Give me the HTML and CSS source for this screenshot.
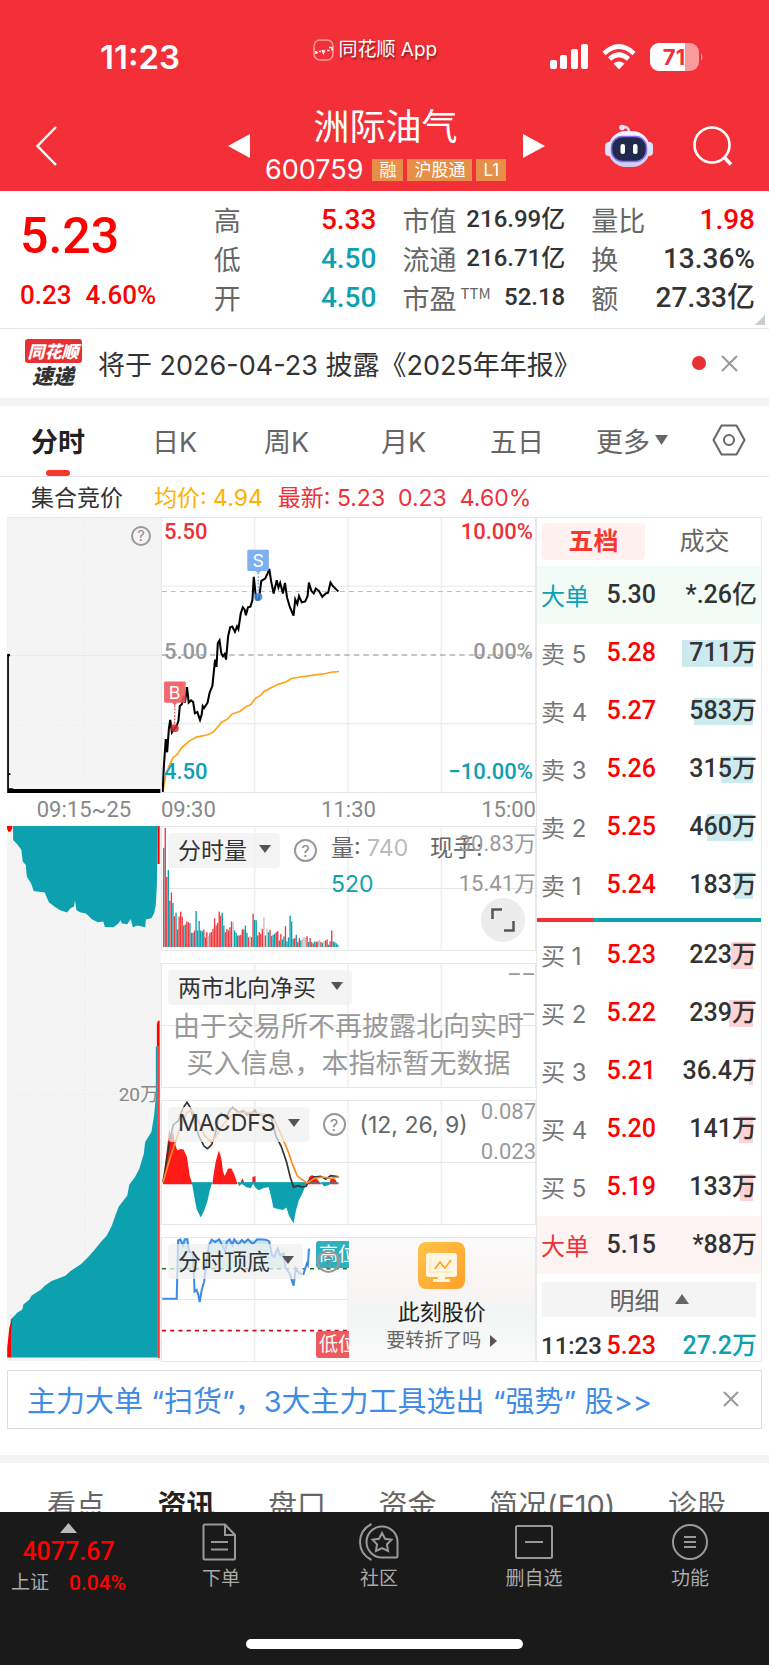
FILE: index.html
```html
<!DOCTYPE html>
<html lang="zh-CN">
<head>
<meta charset="utf-8">
<meta name="viewport" content="width=device-width, initial-scale=1">
<title>洲际油气 600759</title>
<link rel="stylesheet" href="styles.css">
</head>
<body>
<header class="top">
  <div class="status">
    <time class="clock">11:23</time>
    <div class="brand">
      <svg width="21" height="22" viewBox="0 0 21 22" aria-hidden="true"><rect x="1" y="1" width="19" height="20" rx="6" fill="none" stroke="#f99a9d" stroke-width="1.5"/><path d="M2 13.500h3M3 12v3M6 12.500h2M9 11l1.500 3 1-3M14 11.500h2.500M16 8.500h3v3" fill="none" stroke="#fff" stroke-width="1.600"/></svg>
      <span>同花顺 App</span>
    </div>
    <div class="signals">
      <svg width="38" height="26" viewBox="0 0 38 26" fill="#fff" aria-hidden="true"><rect x="0" y="16" width="7" height="9" rx="2"/><rect x="10" y="11" width="7" height="14" rx="2"/><rect x="21" y="5" width="7" height="20" rx="2"/><rect x="31" y="0" width="7" height="25" rx="2"/></svg>
      <svg width="34" height="26" viewBox="0 0 34 26" aria-hidden="true"><g fill="none" stroke="#fff" stroke-width="4.6"><path d="M2 9.500Q17-4.500 32 9.500"/><path d="M7.500 15Q17 6.500 26.500 15"/></g><path d="M11.500 19.500Q17 15.500 22.500 19.500L17 25.500Z" fill="#fff"/></svg>
      <svg width="54" height="28" viewBox="0 0 54 28" aria-hidden="true"><rect width="49" height="28" rx="9" fill="#f99a9d"/><path d="M9 0H35V28H9A9 9 0 0 1 0 19V9A9 9 0 0 1 9 0Z" fill="#fff"/><path d="M51 10q3 4 0 8Z" fill="#f99a9d"/><text class="battery-text" x="24" y="22" text-anchor="middle">71</text></svg>
    </div>
  </div>
  <nav class="titlebar">
    <button class="plain" aria-label="返回"><svg width="22" height="40" viewBox="0 0 22 40"><path d="M20 1L1.500 20 20 39" fill="none" stroke="#fff" stroke-width="2.400"/></svg></button>
    <button class="plain" aria-label="上一只"><svg width="22" height="26" viewBox="0 0 22 26"><path d="M22 1V25L0 13Z" fill="#fff"/></svg></button>
    <div class="stock">
      <h1>洲际油气</h1>
      <div class="code"><span>600759</span><i>融</i><i>沪股通</i><i>L1</i></div>
    </div>
    <button class="plain" aria-label="下一只"><svg width="22" height="26" viewBox="0 0 22 26"><path d="M0 1V25L22 13Z" fill="#fff"/></svg></button>
    <button class="plain" aria-label="智能助手"><svg width="48" height="44" viewBox="0 0 48 44"><defs><linearGradient id="rb" x1="0" y1="0" x2="0" y2="1"><stop offset="0" stop-color="#f6f7ff"/><stop offset="1" stop-color="#c9cdf3"/></linearGradient></defs><path d="M17 3q7-1 7 5" fill="none" stroke="#d6d8f5" stroke-width="2.600"/><circle cx="17" cy="3.500" r="2.800" fill="#e6e8fb"/><rect x="0" y="18" width="8" height="14" rx="4" fill="#dfe1f8"/><rect x="40" y="18" width="8" height="14" rx="4" fill="#dfe1f8"/><rect x="3" y="7" width="42" height="36" rx="18" fill="url(#rb)"/><rect x="6.500" y="12.500" width="35" height="25" rx="11" fill="#1f2a4c" stroke="#8a6cf0" stroke-width="1.500"/><rect x="15.500" y="20" width="4.500" height="10" rx="2" fill="#fff"/><rect x="28" y="20" width="4.500" height="10" rx="2" fill="#fff"/></svg></button>
    <button class="plain" aria-label="搜索"><svg width="40" height="40" viewBox="0 0 40 40" fill="none" stroke="#fff" stroke-width="2.600"><circle cx="19" cy="19" r="17.500"/><path d="M31 31l7 7.500" stroke-width="3.500"/></svg></button>
  </nav>
</header>

<main>
<section class="quote">
  <div class="price">
    <strong>5.23</strong>
    <p><span>0.23</span><span>4.60%</span></p>
  </div>
  <dl>
    <div><dt>高</dt><dd class="up">5.33</dd></div>
    <div><dt>低</dt><dd class="down">4.50</dd></div>
    <div><dt>开</dt><dd class="down">4.50</dd></div>
  </dl>
  <dl class="compact">
    <div><dt>市值</dt><dd>216.99亿</dd></div>
    <div><dt>流通</dt><dd>216.71亿</dd></div>
    <div><dt>市盈<sup>TTM</sup></dt><dd>52.18</dd></div>
  </dl>
  <dl>
    <div><dt>量比</dt><dd class="up">1.98</dd></div>
    <div><dt>换</dt><dd>13.36%</dd></div>
    <div><dt>额</dt><dd>27.33亿</dd></div>
  </dl>
  <span class="corner"></span>
</section>

<section class="news">
  <div class="badge"><b>同花顺</b><em>速递</em></div>
  <a href="#news">将于 2026-04-23 披露《2025年年报》</a>
  <span class="dot"></span>
  <button class="plain" aria-label="关闭"><svg width="17" height="17" viewBox="0 0 17 17"><path d="M1 1l15 15M16 1L1 16" stroke="#999" stroke-width="2"/></svg></button>
</section>

<nav class="periods">
  <button class="active">分时</button>
  <button>日K</button>
  <button>周K</button>
  <button>月K</button>
  <button>五日</button>
  <button>更多<svg width="13" height="10" viewBox="0 0 13 10"><path d="M0 0H13L6.500 10Z" fill="#666"/></svg></button>
  <button aria-label="设置"><svg width="34" height="32" viewBox="0 0 34 32" fill="none" stroke="#666" stroke-width="2"><path d="M9.500 1.500H24.500L32.500 16L24.500 30.500H9.500L1.500 16Z" stroke-linejoin="round"/><circle cx="17" cy="16" r="5"/></svg></button>
</nav>

<div class="legend">
  <span>集合竞价</span><span class="avg">均价: 4.94</span><span class="latest">最新: 5.23&nbsp; 0.23&nbsp; 4.60%</span>
</div>

<section class="board">
  <div class="auction">
    <div class="auction-price">
      <svg viewBox="20 22 447 828" preserveAspectRatio="none">
        <g stroke="#e6e6e6" stroke-width="2"><path d="M246 22V850M20 230H467M20 646H467" stroke-dasharray="3 6"/><path d="M20 436H467M20 22V850"/></g>
        <path d="M23 432V850M24 793h6" stroke="#000" stroke-width="5"/><circle cx="25" cy="435" r="4"/>
        <path d="M23 836H36L40 838H465V850H23Z"/>
      </svg>
      <span class="help">?</span>
    </div>
    <div class="axis center">09:15~25</div>
    <div class="auction-vol">
      <svg viewBox="0 0 154 535" preserveAspectRatio="none">
        <path d="M78 0V535M0 268H154" stroke="#e6e6e6" stroke-dasharray="1 2"/>
        <g transform="translate(-7 -11) scale(.344 .333)">
          <path fill="#0da1b0" d="M38 33V75L50 88 62 104 66 140 75 150 78 185 90 205 98 228 130 233 142 262 160 276 175 286 195 293 205 280 215 275 218 256 222 285 232 292 250 296 268 314 285 322 300 320 305 336 330 337 345 325 350 316 355 326 370 328 380 312 386 337 400 332 422 337 424 314 440 310 448 295 453 270 456 210 458 33Z"/>
          <path fill="red" d="M20 33H36V40L30 50H24L20 40ZM458 33H464V147H458Z"/>
        </g>
        <g transform="translate(-7 254) scale(.344 .335)">
          <path fill="#0da1b0" d="M31 828V715L38 708 50 695 65 685 68 670 85 656 92 643 120 625 130 614 150 600 190 584 205 570 235 550 255 530 275 507 292 485 310 465 325 435 335 405 345 378 370 345 376 312 392 290 405 265 418 220 422 185 440 155 448 105 453 50V-100H459V828Z"/>
          <path fill="red" d="M21 828V800L27 740 36 708 32 760V828ZM456-165L459-177H464V830H460V-100H456Z"/>
        </g>
      </svg>
      <span class="vol-mark">20万</span>
    </div>
  </div>

  <div class="charts">
    <div class="panel main">
      <svg viewBox="467 22 1089 828" preserveAspectRatio="none" fill="none">
        <path class="grid" d="M738 22V850M1010 22V850M1282 22V850M467 228H1556M467 644H1556"/>
        <path d="M467 244H1556" stroke="#d9b98c" stroke-width="3" stroke-dasharray="14 12"/>
        <path d="M467 436H1556" stroke="#888" stroke-width="3" stroke-dasharray="16 12"/>
        <path stroke="#ffa31a" stroke-width="5" d="M470 846L478 800 490 765 500 745 510 738 525 716 545 697 568 684 600 677 615 670 628 656 640 640 658 630 672 614 695 606 712 592 726 586 740 567 755 558 765 546 785 535 808 524 830 517 845 507 880 501 915 496 945 492 960 488 984 486"/>
        <path stroke="#000" stroke-width="6" d="M469 850L472 780 478 690 482 730 487 660 491 632 496 670 504 657 510 650 515 635 519 590 525 585 530 560 534 580 540 533 545 580 552 573 558 578 563 612 570 608 578 632 583 615 586 590 590 596 600 580 606 550 614 530 618 490 622 450 626 472 630 400 635 392 640 430 645 440 650 433 654 450 660 380 666 352 672 350 680 366 686 350 690 358 697 310 703 292 708 298 712 316 718 292 725 290 731 270 735 200 740 250 743 268 750 268 757 212 768 205 775 190 780 176 786 215 793 250 802 210 807 232 812 218 820 250 826 218 832 262 840 290 851 317 856 268 862 282 867 258 875 277 885 274 892 258 896 217 903 242 910 250 916 235 925 242 935 260 945 250 952 248 959 217 966 228 975 237 982 244"/>
        <g fill="#ee5a5e"><path fill-opacity=".9" d="M476 516H532Q536 516 536 520V576Q536 580 532 580H512L504 588 496 580H476Q473 580 473 576V520Q473 516 476 516Z"/><circle cx="504" cy="657" r="12" fill="#d8232b" fill-opacity=".85"/><path d="M504 588V650" stroke="#ee5a5e" stroke-width="4" stroke-dasharray="5 5"/></g>
        <g fill="#6fa8f0"><path fill-opacity=".9" d="M720 118H775Q779 118 779 122V178Q779 182 775 182H756L748 190 740 182H720Q716 182 716 178V122Q716 118 720 118Z"/><circle cx="748" cy="260" r="12" fill="#3f86e0" fill-opacity=".85"/><path d="M748 188V254" stroke="#6fa8f0" stroke-width="4" stroke-dasharray="5 5"/></g>
        <g class="marker"><text x="504" y="568" text-anchor="middle">B</text><text x="748" y="170" text-anchor="middle">S</text></g>
      </svg>
      <span class="tick lt up2">5.50</span><span class="tick rt up2">10.00%</span>
      <span class="tick lm">5.00</span><span class="tick rm">0.00%</span>
      <span class="tick lb down">4.50</span><span class="tick rb down">−10.00%</span>
    </div>
    <div class="axis"><span>09:30</span><span>11:30</span><span>15:00</span></div>

    <div class="panel sub vol">
      <svg viewBox="467 32 1089 372" preserveAspectRatio="none" id="volume"><path class="grid" d="M738 32V404M1010 32V404M1282 32V404M467 218H1556"/></svg>
      <div class="tools"><button class="pill">分时量<s></s></button><span class="help big">?</span><p class="vol-text"><span>量: <i>740</i></span><span>现手:</span><b>520</b></p></div>
      <div class="scale"><span>30.83万</span><span>15.41万</span></div>
      <button class="expand" aria-label="全屏"><svg width="24" height="24" viewBox="0 0 24 24" fill="none" stroke="#555" stroke-width="2.500"><path d="M1.500 11V1.500H11M13 22.500H22.500V13"/></svg></button>
    </div>

    <div class="panel sub">
      <svg viewBox="467 32 1089 372" preserveAspectRatio="none"><path class="grid" d="M738 32V404M1010 32V404M1282 32V404M467 218H1556"/></svg>
      <div class="tools"><button class="pill wide">两市北向净买<s></s></button></div>
      <div class="scale"><span>––</span><span>––</span></div>
      <p class="notice">由于交易所不再披露北向实时<br>买入信息，本指标暂无数据</p>
    </div>

    <div class="panel sub">
      <svg viewBox="467 58 1089 372" preserveAspectRatio="none" fill="none">
        <path class="grid" d="M738 58V430M1010 58V430M1282 58V430M467 244H1556"/>
        <path fill="#ff1a1a" d="M470 310L476 250 484 180 488 145 494 165 500 152 504 185 512 208 520 203 530 205 540 228 548 285 556 310ZM614 310L617 285 624 240 633 208 640 230 645 270 650 285 660 262 670 262 678 280 688 310ZM694 310L702 292 709 310ZM731 310V288L740 285V310ZM890 310L897 288 905 282 915 288 932 310ZM955 310L960 292 972 295 982 310Z"/>
        <path fill="#0da1b0" d="M554 304L560 340 568 385 580 410 590 390 600 360 606 330 614 304ZM688 304L692 316 700 308 712 318 726 322 733 308 740 320 750 328 762 322 778 318 784 340 792 380 805 385 820 388 830 380 838 405 851 428 858 390 866 360 878 335 890 304ZM930 304L940 316 955 312 958 304Z"/>
        <path d="M556 306H614M688 306H984" stroke="#0da1b0" stroke-width="3"/>
        <path stroke="#333" stroke-width="5" d="M470 304L480 240 490 175 500 130 515 118 528 80 540 62 550 78 562 120 575 165 590 195 600 202 612 190 622 160 632 105 640 95 655 110 665 85 673 78 690 92 705 88 715 100 730 95 738 85 745 98 760 102 785 105 800 165 815 195 830 240 842 290 851 318 865 314 875 318 888 316 895 300 910 288 930 286 945 294 960 284 984 287"/>
        <path stroke="#ff8a1f" stroke-width="5" d="M470 304L485 250 500 200 520 140 538 95 552 85 570 110 590 160 610 182 625 165 645 130 665 105 690 92 730 93 770 98 795 115 815 160 835 210 850 255 862 285 890 306 912 292 935 288 960 292 984 287"/>
      </svg>
      <div class="tools"><button class="pill">MACDFS<s></s></button><span class="help big">?</span><p>(12, 26, 9)</p></div>
      <div class="scale"><span>0.087</span><span>0.023</span></div>
    </div>

    <div class="panel sub">
      <svg viewBox="467 468 1089 372" preserveAspectRatio="none" fill="none">
        <path class="grid" d="M738 468V840M1010 468V840M467 654H1010"/>
        <path fill="#b9e0e8" fill-opacity=".8" d="M510 561L514 475 541 472 546 510 558 512 560 561ZM595 561L604 490 612 473 780 475 788 520 795 525 805 500 812 520 822 515 828 561Z"/>
        <path d="M467 561H1010" stroke="#1f7a2a" stroke-width="5" stroke-dasharray="12 12"/>
        <path d="M467 748H1010" stroke="#c1121b" stroke-width="5" stroke-dasharray="12 12"/>
        <path stroke="#3f8be6" stroke-width="6" d="M468 652H510L514 475 520 472 528 490 534 472 541 472 546 510 558 512 562 630 568 625 573 640 577 662 583 625 590 600 597 540 604 490 612 473 622 480 634 472 645 495 652 510 656 480 664 472 672 490 678 472 690 488 700 474 708 482 718 472 732 486 745 472 770 473 780 478 788 520 795 525 800 510 805 500 812 520 822 515 828 560 840 575 851 612 858 560 868 575 880 577 890 545 893 550 896 500"/>
      </svg>
      <span class="level high">高位</span><span class="level low">低位</span>
      <div class="tools"><button class="pill">分时顶底<s></s></button><span class="help big">?</span></div>
      <a class="promo-card" href="#turn">
        <svg width="47" height="47" viewBox="0 0 47 47"><defs><linearGradient id="og" x1="0" y1="0" x2="1" y2="1"><stop offset="0" stop-color="#ffc44a"/><stop offset="1" stop-color="#ffa02a"/></linearGradient></defs><rect width="47" height="47" rx="8" fill="url(#og)"/><rect x="8" y="11" width="31" height="24" rx="3" fill="#fff6e2"/><path d="M20 35h7v2h5v3H15v-3h5Z" fill="#fff6e2"/><path d="M12 16V30H34" fill="none" stroke="#ffe0a0"/><path d="M17 27l5-7 3 4 2 2 6-8" fill="none" stroke="#ffa52e" stroke-width="1.800"/></svg>
        <b>此刻股价</b>
        <span>要转折了吗<svg width="7" height="12" viewBox="0 0 7 12"><path d="M0 0L7 6L0 12Z" fill="#555"/></svg></span>
      </a>
    </div>
  </div>

  <div class="book">
    <div class="book-tabs"><button class="active">五档</button><button>成交</button></div>
    <table>
      <tbody>
        <tr class="big sell"><th scope="row">大单</th><td>5.30</td><td>*.26亿</td></tr>
        <tr><th scope="row">卖 5</th><td>5.28</td><td><u style="width:71px"></u><span>711万</span></td></tr>
        <tr><th scope="row">卖 4</th><td>5.27</td><td><u style="width:59px"></u><span>583万</span></td></tr>
        <tr><th scope="row">卖 3</th><td>5.26</td><td><u style="width:32px"></u><span>315万</span></td></tr>
        <tr><th scope="row">卖 2</th><td>5.25</td><td><u style="width:46px"></u><span>460万</span></td></tr>
        <tr><th scope="row">卖 1</th><td>5.24</td><td><u style="width:18px"></u><span>183万</span></td></tr>
      </tbody>
    </table>
    <div class="ratio"><i></i></div>
    <table class="bids">
      <tbody>
        <tr><th scope="row">买 1</th><td>5.23</td><td><u style="width:22px"></u><span>223万</span></td></tr>
        <tr><th scope="row">买 2</th><td>5.22</td><td><u style="width:24px"></u><span>239万</span></td></tr>
        <tr><th scope="row">买 3</th><td>5.21</td><td><u style="width:4px"></u><span>36.4万</span></td></tr>
        <tr><th scope="row">买 4</th><td>5.20</td><td><u style="width:14px"></u><span>141万</span></td></tr>
        <tr><th scope="row">买 5</th><td>5.19</td><td><u style="width:13px"></u><span>133万</span></td></tr>
        <tr class="big buy"><th scope="row">大单</th><td>5.15</td><td>*88万</td></tr>
      </tbody>
    </table>
    <button class="detail">明细<svg width="14" height="10" viewBox="0 0 14 10"><path d="M0 10H14L7 0Z" fill="#666"/></svg></button>
    <table class="trades"><tbody><tr><th scope="row">11:23</th><td>5.23</td><td>27.2万</td></tr></tbody></table>
  </div>
</section>

<section class="promo">
  <a href="#tools">主力大单 “扫货”，3大主力工具选出 “强势” 股&gt;&gt;</a>
  <button class="plain" aria-label="关闭"><svg width="16" height="16" viewBox="0 0 16 16"><path d="M1 1l14 14M15 1L1 15" stroke="#999" stroke-width="2"/></svg></button>
</section>

<nav class="sections">
  <button>看点</button><button class="active">资讯</button><button>盘口</button><button>资金</button><button>简况(F10)</button><button>诊股</button>
</nav>
</main>

<footer class="dock">
  <div class="dock-row">
    <a class="index" href="#index"><svg width="17" height="10" viewBox="0 0 17 10"><path d="M0 10H17L8.500 0Z" fill="#bbb"/></svg><strong>4077.67</strong><p><span>上证</span><b>0.04%</b></p></a>
    <button><svg width="40" height="38" viewBox="0 0 40 38"><path d="M4 1.500H24L34 12V35.500Q34 36.500 33 36.500H3.500Q2.500 36.500 2.500 35.500V2.500Q2.500 1.500 4 1.500ZM24 1.500V12H34M10 19H27M10 26.500H27"/></svg>下单</button>
    <button><svg width="40" height="38" viewBox="0 0 40 38"><path d="M12.500 1Q1 7 1 19T12.500 37M23 3.500A15.500 15.500 0 0 1 38.500 19V33Q38.500 34.500 37 34.500H23A15.500 15.500 0 0 1 23 3.500ZM23 10L26 15.800 32.500 16.800 28 21.400 29 28 23 25 17 28 18 21.400 13.500 16.800 20 15.800Z"/></svg>社区</button>
    <button><svg width="40" height="38" viewBox="0 0 40 38"><rect x="2" y="3" width="36" height="32" rx="1.500"/><path d="M11 19H29"/></svg>删自选</button>
    <button><svg width="40" height="38" viewBox="0 0 40 38"><circle cx="20" cy="19" r="17"/><path d="M14 14H26M14 19H26M14 24H26"/></svg>功能</button>
  </div>
  <span class="home"></span>
</footer>
<script src="script.js"></script>
</body>
</html>
```
FILE: styles.css
```css
* { box-sizing: border-box; }
body, h1, p, dl, dd { margin: 0; }
:root {
  --cjk: "Noto Sans CJK SC", sans-serif;
  --up: #ff0000;
  --down: #0da1b0;
  --line: #e8e8e8;
}
body { background: #fff; color: #333; font-family: Inter, var(--cjk); }
button { border: 0; padding: 0; margin: 0; background: none; font: inherit; color: inherit; cursor: pointer; }
a { color: inherit; text-decoration: none; }
svg { display: block; }
i, em { font-style: normal; }
.plain { display: block; justify-self: start; }

.top { background: #f33037; color: #fff; }
.status { display: grid; grid-template-columns: 213fr 238fr 153fr; align-items: center; height: 96px; padding: 18px 65px 0 100px; }
.clock { font-size: 33px; font-weight: 600; }
.brand { display: flex; align-items: center; gap: 5px; font-size: 19px; line-height: 24px; padding-bottom: 14px; text-shadow: 1px 2px 2px rgba(90, 0, 0, .6); white-space: nowrap; }
.signals { display: flex; align-items: center; gap: 14px; }
.battery-text { font: 700 22px Inter, sans-serif; fill: #f33037; }
.titlebar { display: grid; grid-template-columns: 192fr 37fr 258fr 82fr 88fr 40fr; align-items: center; height: 95px; padding: 5px 36px 6px; }
.stock { width: max-content; padding-bottom: 6px; text-align: center; white-space: nowrap; }
.stock h1 { margin-bottom: 8px; font: 400 36px/46px var(--cjk); }
.code { display: flex; align-items: center; gap: 4px; font-size: 27px; line-height: 30px; }
.code span { margin-right: 5px; }
.code i { background: #e58f48; font-size: 17px; line-height: 22px; padding: 0 7px; }

.quote { position: relative; display: grid; grid-template-columns: 193fr 162fr 188fr 189fr; padding: 9px 14px 10px 20px; border-bottom: 1px solid var(--line); }
.quote dl { white-space: nowrap; }
.quote dl + dl { margin-left: 26px; }
.price { color: var(--up); font-family: Roboto, sans-serif; font-weight: 500; }
.price strong { display: block; font-size: 50px; line-height: 72px; font-weight: 500; }
.price p { display: flex; gap: 14px; font-size: 26px; line-height: 46px; }
.quote dl div { display: flex; justify-content: space-between; align-items: center; height: 39px; }
.quote dt { font: 400 27px/39px var(--cjk); color: #666; }
.quote dd { font: 500 28px/39px Roboto, var(--cjk); }
.quote .compact dd { font-size: 24px; }
.quote sup { font-size: 15px; line-height: 0; margin-left: 4px; }
.up { color: var(--up); }
.up2 { color: #ee3038; }
.down { color: var(--down); }
.corner { position: absolute; right: 4px; bottom: 3px; border-left: 10px solid transparent; border-bottom: 10px solid #ccc; }

.news { display: flex; align-items: center; height: 69px; padding: 0 31px 1px 24px; }
.badge { display: flex; flex-direction: column; align-items: center; width: 58px; font: italic 900 17px/24px var(--cjk); }
.badge b { width: 57px; border-radius: 3px; background: #ea2f33; color: #fff; text-align: center; }
.badge em { font-style: italic; font-size: 21px; line-height: 24px; }
.news a { flex: 1; margin-left: 16px; font-size: 27px; color: #333; white-space: nowrap; }
.dot { width: 14px; height: 14px; border-radius: 50%; background: #ea2f33; margin-right: 15px; }

.periods { display: grid; grid-template-columns: 121fr 112fr 117fr 109fr 106fr 116fr 34fr; height: 79px; padding: 0 23px 2px 31px; border-top: 8px solid #f4f4f4; border-bottom: 1px solid var(--line); font-size: 27px; color: #666; }
.periods button { position: relative; display: flex; align-items: center; gap: 5px; justify-self: start; white-space: nowrap; }
.periods .active { font-weight: 700; color: #222; }
.periods .active::after { content: ""; position: absolute; left: 50%; bottom: -2px; width: 24px; height: 6px; margin-left: -12px; border-radius: 3px; background: #f8382f; }

.legend { display: flex; align-items: center; height: 40px; padding: 0 0 2px 31px; font-size: 23px; white-space: nowrap; }
.legend .avg { margin: 0 15px 0 31px; color: #ffb000; }
.legend .latest { color: #ee3038; }

.board { display: grid; grid-template-columns: 154fr 375fr 226fr; margin: 0 7px; }
.board svg text { font-family: Inter, sans-serif; }
.auction-price, .auction-vol { position: relative; background: #f4f4f4; }
.auction-price { height: 276px; border-top: 1px solid var(--line); }
.auction-price > svg, .auction-vol > svg, .panel > svg { width: 100%; height: 100%; }
.auction-vol { height: 535px; }
.axis { display: flex; justify-content: space-between; align-items: center; height: 33px; font: 400 22px/33px Roboto, sans-serif; color: #888; }
.axis.center { justify-content: center; }
.help { display: flex; justify-content: center; align-items: center; width: 20px; height: 20px; border: 2px solid #999; border-radius: 50%; font-size: 14px; line-height: 1; color: #888; }
.help.big { width: 23px; height: 23px; font-size: 16px; flex: none; }
.auction-price .help { position: absolute; right: 10px; top: 8px; }
.vol-mark { position: absolute; right: 2px; top: 255px; font: 400 19px/28px Roboto, var(--cjk); color: #888; }

.panel { position: relative; border: 1px solid var(--line); overflow: hidden; }
.main { height: 276px; }
.sub { height: 125px; }
.sub + .sub { margin-top: 12px; }
.grid { stroke: var(--line); stroke-width: 3; fill: none; }
.marker { font-size: 52px; fill: #fff; }
.tick { position: absolute; font: 500 22px/26px Roboto, sans-serif; }
.lt, .lm, .lb { left: 2px; }
.rt, .rm, .rb { right: 2px; }
.lt, .rt { top: 1px; }
.lm, .rm { top: 121px; color: #999; }
.lb, .rb { bottom: 7px; }
.tools { position: absolute; left: 6px; top: 6px; display: flex; align-items: center; gap: 14px; font-size: 23px; color: #666; white-space: nowrap; }
.pill { display: flex; align-items: center; gap: 12px; height: 35px; padding: 0 9px 3px 10px; border-radius: 4px; background: rgba(240, 240, 240, .72); font-size: 23px; color: #333; }
.pill.wide { gap: 15px; }
.pill s { border: 6px solid transparent; border-top: 8px solid #555; border-bottom: 0; }
.vol-text { display: grid; grid-template-columns: 99px auto; align-self: start; line-height: 30px; row-gap: 6px; height: 30px; font-size: 23px; }
.vol-text i { color: #bbb; }
.vol-text b { color: var(--down); font-weight: 400; }
.scale { position: absolute; right: -1px; top: -9px; text-align: right; font: 400 22px/40px Roboto, var(--cjk); color: #999; }
.scale span { display: block; }
.vol .scale { top: -3px; }
.expand { position: absolute; right: 10px; bottom: 8px; display: grid; place-items: center; width: 44px; height: 44px; border-radius: 50%; background: #ececec; }
.notice { position: absolute; left: 0; right: 0; top: 42px; text-align: center; font: 400 27px/37px var(--cjk); color: #999; white-space: nowrap; }
.level { position: absolute; left: 154px; width: 60px; padding: 0 3px; border-radius: 3px; color: #fff; font-size: 19px; line-height: 27px; }
.high { top: 3px; background: #2fb0bd; }
.low { bottom: 3px; background: #ee5a5e; }
.promo-card { position: absolute; left: 50%; right: 0; top: 0; bottom: 0; display: flex; flex-direction: column; align-items: center; padding-top: 4px; background: linear-gradient(#fafafa, #fbf4f4 40%, #f1f5f4 60%, #fafafa); color: #222; }
.promo-card b { font-size: 22px; line-height: 32px; margin-top: 7px; font-weight: 400; }
.promo-card span { display: flex; align-items: center; gap: 9px; font-size: 19px; line-height: 26px; color: #666; }

.book { display: flex; flex-direction: column; border: 1px solid var(--line); }
.book-tabs { display: grid; grid-template-columns: 1fr 1fr; gap: 8px; height: 48px; padding: 5px 5px 6px; font-size: 25px; color: #666; }
.book-tabs button { border-radius: 4px; line-height: 37px; }
.book-tabs .active { background: #fff1f0; color: #f8382f; font-weight: 700; }
.book table { width: 100%; border-collapse: collapse; table-layout: fixed; white-space: nowrap; }
.book tr { height: 58px; }
.book th { width: 31%; padding: 0 0 2px 4px; text-align: left; font-size: 24px; font-weight: 400; color: #777; }
.book td { position: relative; width: 25%; padding: 0; font: 500 25px/30px Roboto, var(--cjk); color: var(--up); }
.book td:last-child { width: 44%; padding-right: 4px; text-align: right; color: #333; }
.book td span { position: relative; }
.book u { position: absolute; right: 8px; top: 16px; height: 27px; background: #cdebef; }
.bids u { background: #fdd3d5; }
.book .big td { color: #333; }
.sell { background: #f2fbf6; }
.buy { background: #fff4f4; }
.book .sell th { color: var(--down); }
.book .buy th { color: #ee3038; }
.ratio { height: 4px; margin: 4px 0; background: var(--down); }
.ratio i { display: block; width: 25%; height: 4px; background: #ee3038; }
.detail { display: flex; justify-content: center; align-items: center; gap: 15px; height: 35px; margin: 8px 5px 0; padding-bottom: 2px; background: #f4f4f4; font-size: 25px; color: #666; }
.book .trades { flex: 1; }
.book .trades tr { height: 42px; }
.book .trades th { font: 500 24px/30px Roboto, sans-serif; color: #333; }
.book .trades td:last-child { color: var(--down); }
.book .trades th, .book .trades td { padding-top: 13px; padding-bottom: 0; }

.promo { display: flex; justify-content: space-between; align-items: center; height: 59px; margin: 8px 7px 26px; padding: 0 22px 2px 19px; border: 1px solid #ddd; }
.promo a { font-size: 29px; color: #3f8be6; white-space: nowrap; }
.sections { display: flex; justify-content: space-between; align-items: flex-start; height: 94px; padding: 22px 43px 0 47px; border-top: 8px solid #f4f4f4; font-size: 29px; line-height: 42px; color: #666; white-space: nowrap; }
.sections .active { font-weight: 700; color: #222; }

.dock { position: fixed; left: 0; right: 0; bottom: 0; height: 153px; background: #1a1a1a; color: #aaa; }
.dock-row { display: grid; grid-template-columns: 137fr 168fr 148fr 162fr 150fr 4fr; }
.dock button { display: flex; flex-direction: column; align-items: center; gap: 4px; padding-top: 11px; font-size: 19px; line-height: 28px; }
.dock button svg { fill: none; stroke: #999; stroke-width: 2; }
.index { display: flex; flex-direction: column; align-items: center; padding-top: 11px; }
.index strong { font: 500 25px/38px Roboto, sans-serif; color: var(--up); }
.index p { display: flex; align-items: center; gap: 20px; font-size: 19px; line-height: 24px; }
.index b { font: 500 21px/24px Roboto, sans-serif; color: var(--up); }
.home { position: absolute; left: 50%; bottom: 16px; width: 36%; height: 10px; margin-left: -18%; border-radius: 5px; background: #fff; }
```
FILE: script.js
```js
// Per-minute volume: colour letter (r up, t down, g flat) and bar height.
const bars = ("t300 r360 r212 t233 r140 r165 t133 r93 t104 r53 r92 r107 r92 t65 t68 r77 r75 t72 r43 t43 r50 t109 t50 t79 t50 t48 r53 r29 r45 g33 " +
  "r43 r45 r55 r87 r65 r73 r107 r95 t104 t65 r45 r55 r50 r60 r77 g75 t50 t43 t35 r35 r37 r53 t53 t65 t43 r29 g33 r30 r101 t82 " +
  "t81 r35 r45 r40 r55 g91 r35 g55 t45 r52 t33 t37 t40 r45 r48 t20 r40 t23 t32 r63 t17 t29 t95 t77 t25 r27 t37 r15 r27 t20 " +
  "g25 g31 g29 r33 t15 r27 t15 r11 t17 r15 t17 g22 r15 t13 g17 r20 r23 t7 r17 r50 t17 t15 t11 t7").split(" ");
const colours = { r: "#ee3a3f", t: "#0da1b0", g: "#c4c4c4" };
const chart = document.getElementById("volume");
bars.forEach((bar, i) => {
  const rect = document.createElementNS("http://www.w3.org/2000/svg", "rect");
  const height = Number(bar.slice(1));
  rect.setAttribute("x", 470 + i * 4.5);
  rect.setAttribute("y", 395 - height);
  rect.setAttribute("width", 4);
  rect.setAttribute("height", height);
  rect.setAttribute("fill", colours[bar[0]]);
  chart.append(rect);
});
```
